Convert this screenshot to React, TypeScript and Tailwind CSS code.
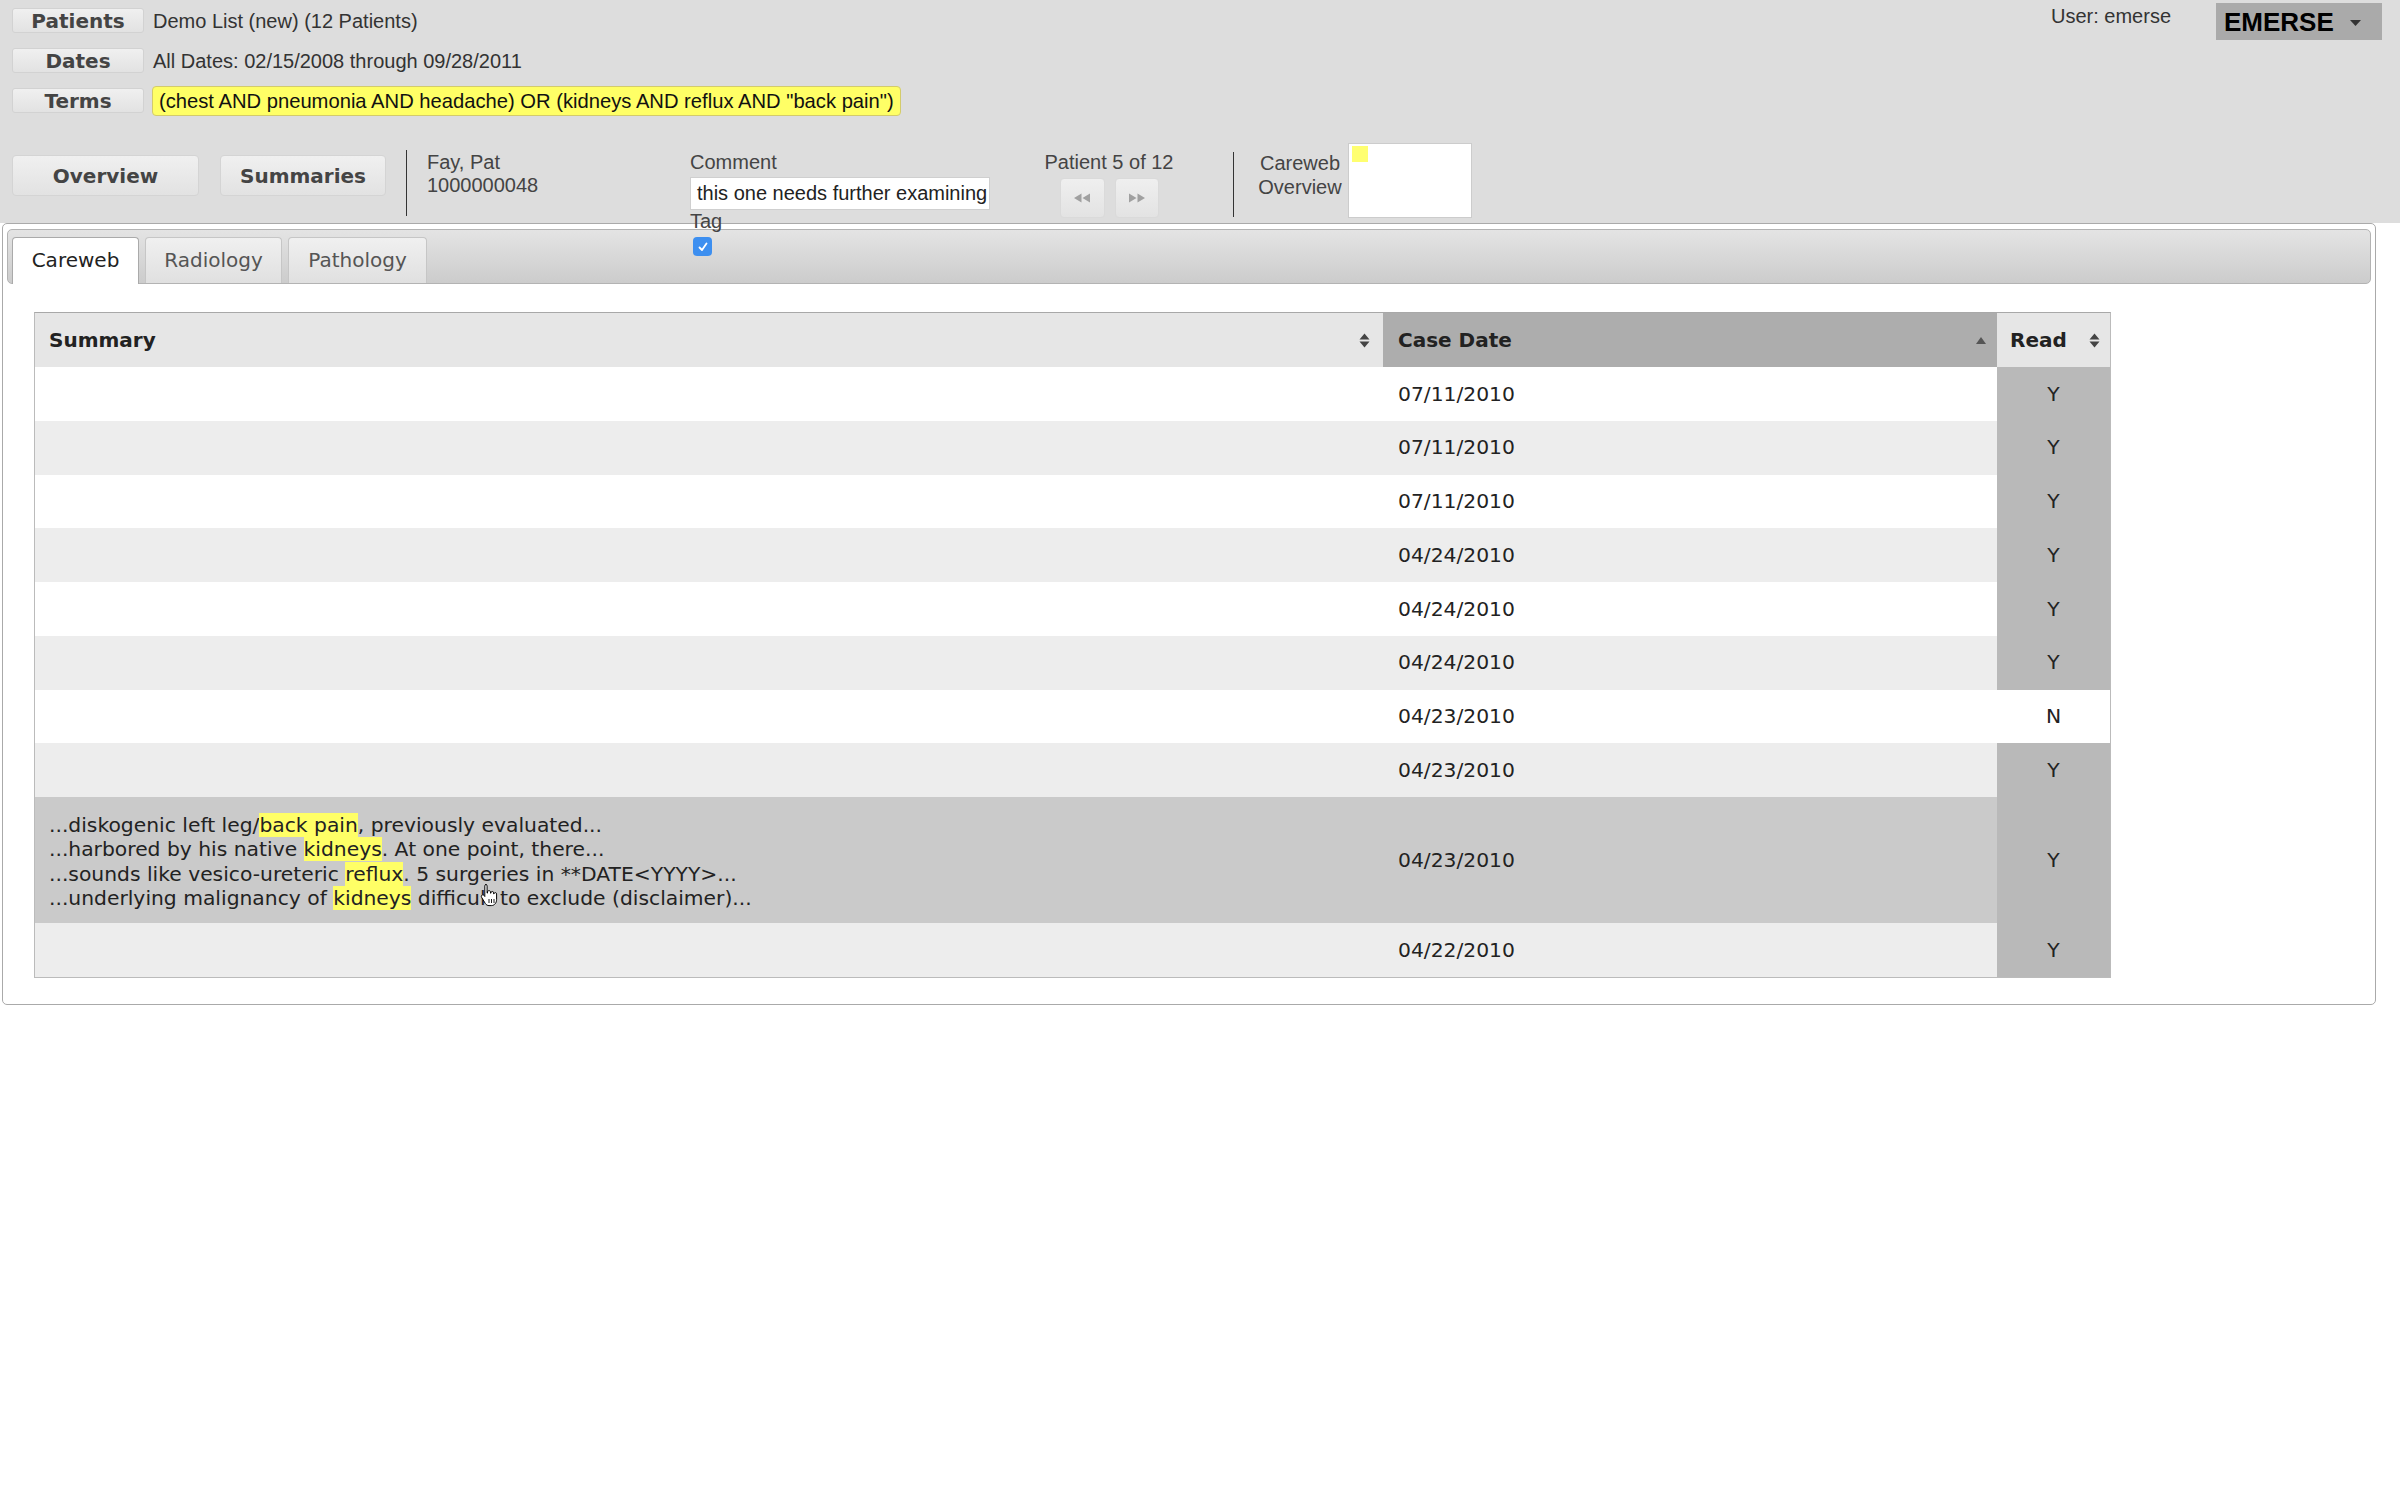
import React from 'react';

const ARIAL = "font-['Liberation_Sans',Arial,sans-serif]";
const VERD = "font-['DejaVu_Sans',Verdana,sans-serif]";

function SortBoth() {
  return (
    <svg width="11" height="17" viewBox="0 0 11 17" className="shrink-0">
      <path d="M0.5 7.5 L5.5 1.5 L10.5 7.5 Z M0.5 9.5 L5.5 15.5 L10.5 9.5 Z" fill="#444" />
    </svg>
  );
}

function SortUp() {
  return (
    <svg width="10" height="7" viewBox="0 0 10 7" className="shrink-0">
      <path d="M0 7 L5 0 L10 7 Z" fill="#555" />
    </svg>
  );
}

function Hl({ children }: { children: React.ReactNode }) {
  return <span className="bg-[#ffff66]">{children}</span>;
}

function LabelBtn({ children }: { children: React.ReactNode }) {
  return (
    <div
      className={`flex h-[25px] w-[132px] items-center justify-center rounded-[3px] border border-[#d2d2d2] bg-linear-to-b from-[#f0f0f0] to-[#e2e2e2] text-[20px] font-bold leading-none text-[#444] ${VERD}`}
    >
      {children}
    </div>
  );
}

function NavIcon({ dir }: { dir: 'prev' | 'next' }) {
  return (
    <svg width="17" height="10" viewBox="0 0 17 10">
      {dir === 'prev' ? (
        <path d="M0 5 L7.5 0.5 L7.5 9.5 Z M8.5 5 L16 0.5 L16 9.5 Z" fill="#a0a0a0" />
      ) : (
        <path d="M1 0.5 L8.5 5 L1 9.5 Z M9.5 0.5 L17 5 L9.5 9.5 Z" fill="#a0a0a0" />
      )}
    </svg>
  );
}

type Row = { date: string; read: string; tall?: boolean };

const rows: Row[] = [
  { date: '07/11/2010', read: 'Y' },
  { date: '07/11/2010', read: 'Y' },
  { date: '07/11/2010', read: 'Y' },
  { date: '04/24/2010', read: 'Y' },
  { date: '04/24/2010', read: 'Y' },
  { date: '04/24/2010', read: 'Y' },
  { date: '04/23/2010', read: 'N' },
  { date: '04/23/2010', read: 'Y' },
  { date: '04/23/2010', read: 'Y', tall: true },
  { date: '04/22/2010', read: 'Y' },
];

function HandCursor() {
  return (
    <svg width="18" height="24" viewBox="0 0 18 24" className="absolute left-[445px] top-[86px]">
      <path
        d="M5.5 1.5c.9 0 1.6.7 1.6 1.6v7h.4V9c0-.8.7-1.4 1.5-1.4s1.5.6 1.5 1.4v1.2h.4V9.8c0-.8.6-1.3 1.4-1.3s1.3.5 1.3 1.3v1h.4c0-.7.6-1.2 1.3-1.2s1.3.5 1.3 1.2v5.8c0 3-2 6-5.2 6H9c-1.6 0-2.8-.8-3.6-2L1.6 14.3c-.5-.8-.3-1.8.4-2.2.7-.4 1.6-.3 2.1.4l.7 1V3.1c0-.9.7-1.6 1.6-1.6z"
        fill="#fff"
        stroke="#000"
        strokeWidth="1"
      />
      <path d="M9 16v4M11.5 16v4M14 16v4" stroke="#000" strokeWidth="0.9" />
    </svg>
  );
}

export default function App() {
  return (
    <div className="min-h-[1500px] w-full bg-white">
      {/* Header */}
      <div className={`relative z-10 h-[223px] bg-[#dddddd] ${ARIAL}`}>
        <div className="flex">
          <div className="flex flex-col gap-[15px] pl-[12px] pt-[8px]">
            <div className="flex items-center">
              <LabelBtn>Patients</LabelBtn>
              <span className="ml-[9px] mt-[1px] text-[20px] leading-[23px] text-[#333]">Demo List (new) (12 Patients)</span>
            </div>
            <div className="flex items-center">
              <LabelBtn>Dates</LabelBtn>
              <span className="ml-[9px] mt-[1px] text-[20px] leading-[23px] text-[#333]">
                All Dates: 02/15/2008 through 09/28/2011
              </span>
            </div>
            <div className="flex h-[25px] items-center">
              <LabelBtn>Terms</LabelBtn>
              <span className="ml-[8px] mt-[1px] flex h-[30px] items-center rounded-[4px] border border-[#d3cb6b] bg-[#ffff66] px-[6px] text-[20.2px] leading-[23px] text-[#111]">
                (chest AND pneumonia AND headache) OR (kidneys AND reflux AND "back pain")
              </span>
            </div>
          </div>
          <div className="ml-auto flex items-start">
            <div className="mt-[5px] text-[20px] leading-[23px] text-[#333]">User: emerse</div>
            <div className="ml-[45px] mr-[18px] mt-[3px] flex h-[37px] w-[166px] items-center bg-[#aaaaaa] pl-[8px]">
              <span className="text-[26px] font-bold leading-none text-black">EMERSE</span>
              <svg width="11" height="6" viewBox="0 0 11 6" className="ml-[16px] mt-[2px]">
                <path d="M0 0 L11 0 L5.5 6 Z" fill="#333" />
              </svg>
            </div>
          </div>
        </div>

        <div className="mt-[30px] flex items-start">
          <div
            className={`ml-[12px] mt-[12px] flex h-[41px] w-[187px] items-center justify-center rounded-[4px] border border-[#d4d4d4] bg-linear-to-b from-[#f0f0f0] to-[#e2e2e2] text-[20px] font-bold text-[#444] ${VERD}`}
          >
            Overview
          </div>
          <div
            className={`ml-[21px] mt-[12px] flex h-[41px] w-[166px] items-center justify-center rounded-[4px] border border-[#d4d4d4] bg-linear-to-b from-[#f0f0f0] to-[#e2e2e2] text-[20px] font-bold text-[#444] ${VERD}`}
          >
            Summaries
          </div>
          <div className="ml-[20px] mt-[7px] h-[66px] w-px bg-[#333]" />
          <div className="ml-[20px] mt-[8px] w-[263px] text-[20px] leading-[23px] text-[#444]">
            <div>Fay, Pat</div>
            <div>1000000048</div>
          </div>
          <div className="mt-[8px] flex w-[300px] flex-col text-[20px] leading-[23px] text-[#444]">
            <div>Comment</div>
            <div className="mt-[3px] flex h-[33px] w-[300px] items-center border border-[#cfcfcf] bg-white pl-[6px] text-[#222]">
              this one needs further examining
            </div>
            <div>Tag</div>
            <div className="ml-[3px] mt-[4px] flex h-[19px] w-[19px] items-center justify-center rounded-[4px] bg-[#3d8ff0]">
              <svg width="12" height="12" viewBox="0 0 12 12">
                <path d="M2.5 6.5 L5 9 L9.5 2.5" stroke="#fff" strokeWidth="1.8" fill="none" strokeLinecap="round" strokeLinejoin="round" />
              </svg>
            </div>
          </div>
          <div className="ml-[54px] mt-[8px] flex w-[130px] flex-col items-center text-[20px] leading-[23px] text-[#444]">
            <div className="whitespace-nowrap">Patient 5 of 12</div>
            <div className="mt-[4px] flex gap-[10px]">
              <div className="flex h-[40px] w-[45px] items-center justify-center rounded-[4px] border border-[#dadada] bg-linear-to-b from-[#efefef] to-[#e3e3e3]">
                <NavIcon dir="prev" />
              </div>
              <div className="flex h-[40px] w-[44px] items-center justify-center rounded-[4px] border border-[#dadada] bg-linear-to-b from-[#efefef] to-[#e3e3e3]">
                <NavIcon dir="next" />
              </div>
            </div>
          </div>
          <div className="ml-[59px] mt-[9px] h-[65px] w-px bg-[#333]" />
          <div className="ml-[24px] mt-[8px] w-[84px] text-center text-[20px] leading-[24px] text-[#444]">
            <div>Careweb</div>
            <div>Overview</div>
          </div>
          <div className="ml-[6px] h-[75px] w-[124px] border border-[#cccccc] bg-white pl-[3px] pt-[2px]">
            <div className="h-[16px] w-[16px] bg-[#ffff70]" />
          </div>
        </div>
      </div>

      {/* Panel */}
      <div className={`ml-[2px] h-[782px] w-[2374px] rounded-[5px] border border-[#aaaaaa] bg-white px-[4px] pt-[5px] ${VERD}`}>
        <div className="flex h-[55px] items-end gap-[6px] rounded-[5px] border border-[#b3b3b3] bg-linear-to-b from-[#e4e4e4] to-[#cccccc] pl-[4px]">
          <div className="-mb-px flex h-[47px] w-[127px] items-center justify-center rounded-t-[4px] border border-b-0 border-[#aaaaaa] bg-white pb-[2px] text-[20px] text-[#222]">
            Careweb
          </div>
          <div className="flex h-[46px] w-[137px] items-center justify-center rounded-t-[4px] border border-b-0 border-[#c6c6c6] bg-linear-to-b from-[#f0f0f0] to-[#e0e0e0] pb-[2px] text-[20px] text-[#555]">
            Radiology
          </div>
          <div className="flex h-[46px] w-[139px] items-center justify-center rounded-t-[4px] border border-b-0 border-[#c6c6c6] bg-linear-to-b from-[#f0f0f0] to-[#e0e0e0] pb-[2px] text-[20px] text-[#555]">
            Pathology
          </div>
        </div>

        <div className="ml-[27px] mt-[28px] w-[2077px] border border-[#bbbbbb] border-t-[#a8a8a8] text-[20.3px] text-[#222]">
          <div className="grid h-[54px] grid-cols-[1348px_614px_113px] text-[20px] font-bold">
            <div className="flex items-center justify-between bg-[#e6e6e6] pl-[14px] pr-[13px]">
              <span>Summary</span>
              <SortBoth />
            </div>
            <div className="flex items-center justify-between bg-[#adadad] pl-[15px] pr-[11px]">
              <span>Case Date</span>
              <SortUp />
            </div>
            <div className="flex items-center justify-between bg-[#e6e6e6] pl-[13px] pr-[10px]">
              <span>Read</span>
              <SortBoth />
            </div>
          </div>
          {rows.map((r, i) => {
            const even = i % 2 === 1;
            const base = r.tall ? 'bg-[#cacaca]' : even ? 'bg-[#ededed]' : 'bg-white';
            const readBg = r.read === 'N' ? 'bg-white' : 'bg-[#b9b9b9]';
            const h = r.tall ? 'h-[126px]' : i === rows.length - 1 ? 'h-[54px]' : 'h-[53.75px]';
            return (
              <div key={i} className={`grid grid-cols-[1348px_614px_113px] ${h}`}>
                <div className={`relative flex items-center pl-[14px] ${base}`}>
                  {r.tall && (
                    <>
                      <div className="pt-[3px] leading-[24.5px]">
                        <div>
                          ...diskogenic left leg/<Hl>back pain</Hl>, previously evaluated...
                        </div>
                        <div>
                          ...harbored by his native <Hl>kidneys</Hl>. At one point, there...
                        </div>
                        <div>
                          ...sounds like vesico-ureteric <Hl>reflux</Hl>. 5 surgeries in **DATE&lt;YYYY&gt;...
                        </div>
                        <div>
                          ...underlying malignancy of <Hl>kidneys</Hl> difficult to exclude (disclaimer)...
                        </div>
                      </div>
                      <HandCursor />
                    </>
                  )}
                </div>
                <div className={`flex items-center pl-[15px] ${base}`}>{r.date}</div>
                <div className={`flex items-center justify-center ${readBg}`}>{r.read}</div>
              </div>
            );
          })}
        </div>
      </div>
    </div>
  );
}
